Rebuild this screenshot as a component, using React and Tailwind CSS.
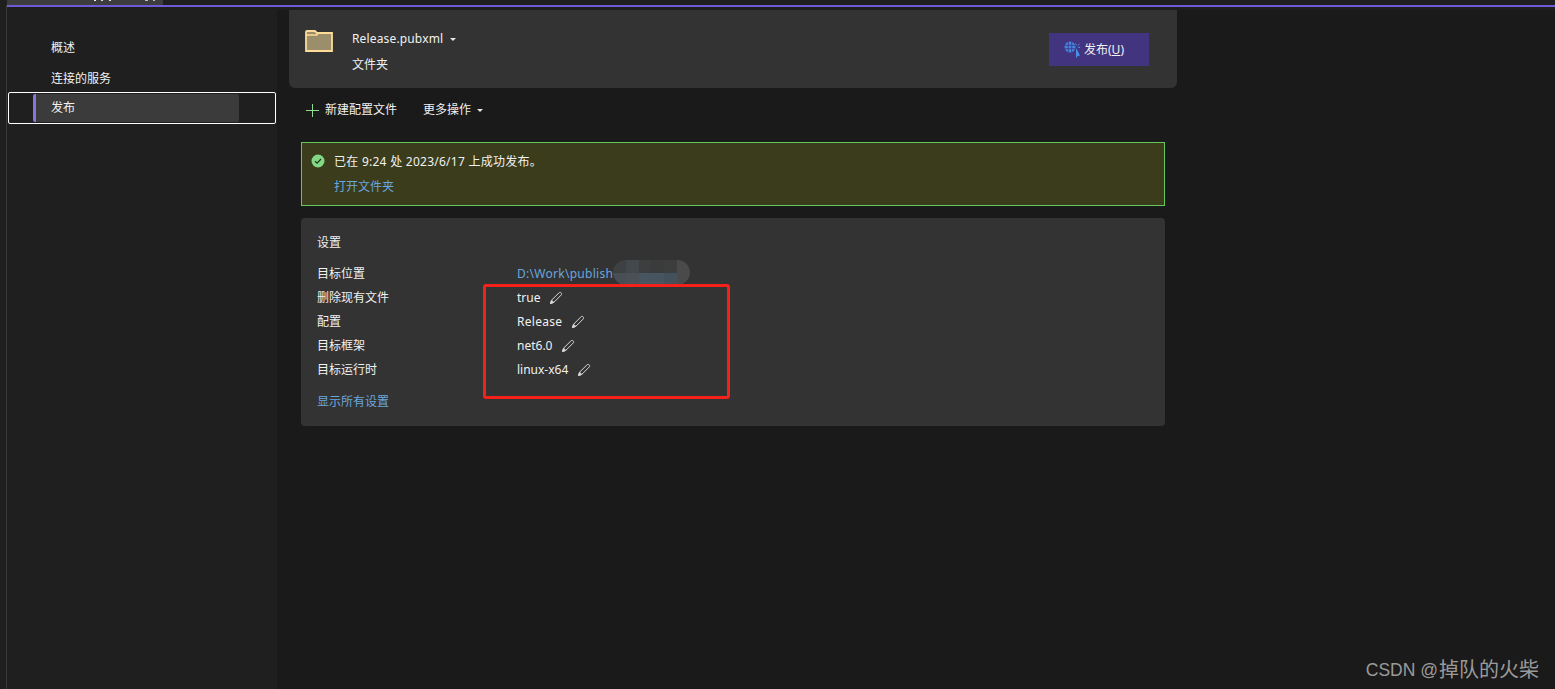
const font = { fontFamily: '"Noto Sans", "Noto Sans CJK SC", sans-serif' };

function Pencil() {
  return (
    <svg width="14" height="14" viewBox="0 0 14 14" fill="none" stroke="#d8d8d8" strokeWidth="1" className="shrink-0">
      <path d="M1.5 12.5 L2.6 9.2 L9.9 1.9 C10.6 1.2 11.5 1.2 12.1 1.8 C12.8 2.4 12.8 3.4 12.1 4.1 L4.8 11.4 Z" />
      <path d="M1.5 12.5 L2.6 9.2 L4.8 11.4 Z" fill="#d8d8d8" />
    </svg>
  );
}

function Caret({ className }) {
  return <span className={"inline-block w-0 h-0 border-l-[3.5px] border-r-[3.5px] border-t-[3.5px] border-l-transparent border-r-transparent border-t-[#e8e8e8] " + className} />;
}

function PublishIcon() {
  return (
    <svg width="17" height="18" viewBox="0 0 17 18" fill="none" className="shrink-0">
      <circle cx="6" cy="6" r="5.5" fill="#4386e0" />
      <path d="M0.8 4.3 H11.2 M0.8 7.7 H11.2 M4.3 0.8 V11.2 M7.7 0.8 V11.2" stroke="#42347f" strokeWidth="0.8" />
      <path d="M12 7 V17.5 L13.6 15 L16 14.6 Z" fill="#4a90e8" />
      <path d="M11.5 2.5 L12.5 4.2 M15.5 3 L13.8 4.5 M16 6.5 L13.8 6.2" stroke="#4a90e8" strokeWidth="1" />
    </svg>
  );
}

const mosaicTop = ["#3d4144", "#42484c", "#3c3e40", "#3a3b3b", "#3d3d3d", "#4a4a4a"];
const mosaicBottom = ["#474f54", "#4a5156", "#46555f", "#46555f", "#44505a", "#4a4a4a"];

function Mosaic() {
  return (
    <span className="absolute left-[96px] top-[-6px] w-[77px] h-[25px] rounded-full overflow-hidden grid grid-cols-6">
      {mosaicTop.map((c, i) => <span key={"t" + i} style={{ backgroundColor: c }} />)}
      {mosaicBottom.map((c, i) => <span key={"b" + i} style={{ backgroundColor: c }} />)}
    </span>
  );
}

function Row({ label, value, link, blur, edit, spaced }) {
  return (
    <div className="flex items-center h-6">
      <div className="w-[200px] text-[#f1f1f1]">{label}</div>
      <div className={"relative flex items-center " + (link ? "text-[#6ba6dd]" : "text-[#f1f1f1]")}>
        <span className={spaced ? "tracking-[0.28px]" : ""}>{value}</span>
        {edit && <span className="ml-[9px] flex"><Pencil /></span>}
        {blur && <Mosaic />}
      </div>
    </div>
  );
}

export default function App() {
  return (
    <div style={font} className="w-[1555px] h-[689px] overflow-hidden relative bg-[#1a1a1a] text-[12px] leading-[16px] text-[#f1f1f1] flex flex-col">
      <div className="h-[5px] pl-[7px] bg-[#1f1f1f] flex shrink-0">
        <div className="w-[156px] h-[5px] bg-[#3d3d3d] flex items-start pl-[87px]">
          <span className="w-[2px] h-[1px] bg-[#f0f0f0]" />
          <span className="ml-[5px] w-[2px] h-[1px] bg-[#e8d8c8]" />
          <span className="ml-[6px] w-[2px] h-[1px] bg-[#d8e8f0]" />
          <span className="ml-[34px] w-[3px] h-[1px] bg-[#bdbdbd]" />
          <span className="ml-[5px] w-[2px] h-[1px] bg-[#bdbdbd]" />
        </div>
      </div>
      <div className="h-[2px] ml-[7px] bg-[#6e5bd6] shrink-0" />
      <div className="flex flex-1 min-h-0">
        <div className="w-[7px] bg-[#1f1f1f] border-r border-[#3a3a3a] -mt-[2px] shrink-0" />
        <aside className="w-[270px] bg-[#1f1f1f] shrink-0 pt-[26px] pl-px">
          <div className="h-[31px] flex items-start pt-[7px] pl-[43px]">概述</div>
          <div className="h-[30px] flex items-start pt-[7px] pl-[43px]">连接的服务</div>
          <div className="-mt-[2px] h-[32px] w-[268px] border border-white rounded-[2px] flex items-center pl-6">
            <div className="w-[206px] h-[28px] bg-[#3b3b3b] rounded-[2px] border-l-[3px] border-[#8576dc] flex items-center pl-[15px]">发布</div>
          </div>
        </aside>
        <main className="w-[900px] shrink-0 pl-3">
          <div className="h-[3px] -ml-3 bg-[#1e1e1e]" />
          <section className="h-[78px] w-[888px] bg-[#333333] rounded-b-[6px] flex items-start pl-4 pr-7">
            <svg width="28" height="22" viewBox="0 0 28 22" className="mt-[20px] shrink-0">
              <path d="M1 21 V1.8 Q1 1 2 1 H10 L12 3 H27 V21 Z" fill="#9c8d6b" stroke="#fbdc98" strokeWidth="1.8" />
              <path d="M1 5 H12 L13 3" fill="none" stroke="#fbdc98" strokeWidth="1.4" />
            </svg>
            <div className="ml-[19px] pt-[21px] flex-1">
              <div className="flex items-center h-4">
                <span className="tracking-[0.15px]">Release.pubxml</span>
                <Caret className="ml-[7px]" />
              </div>
              <div className="mt-[10px]">文件夹</div>
            </div>
            <button className="mt-[23px] w-[100px] h-[33px] bg-[#42347f] flex items-center pl-[15px] gap-[3px] text-[#f1f1f1]">
              <PublishIcon />
              <span>发布(<span className="underline">U</span>)</span>
            </button>
          </section>
          <div className="h-[44px] flex items-center pl-[17px]">
            <svg width="13" height="13" viewBox="0 0 13 13" stroke="#93d893" strokeWidth="1"><path d="M6.5 0 V13 M0 6.5 H13" /></svg>
            <span className="ml-[6px]">新建配置文件</span>
            <span className="ml-[26px]">更多操作</span>
            <Caret className="ml-[6px]" />
          </div>
          <div className="ml-3 w-[864px]">
            <div className="mt-[10px] h-[64px] bg-[#3a3c1c] border border-[#63c95a] pl-[9px] pt-[11px] flex">
              <svg width="14" height="14" viewBox="0 0 14 14" className="shrink-0">
                <circle cx="7" cy="7" r="6.5" fill="#83d883" />
                <path d="M4 7.2 L6.1 9.2 L10 5" fill="none" stroke="#1f3a1f" strokeWidth="1.3" />
              </svg>
              <div className="ml-[9px]">
                <div className="tracking-[0.26px]">已在 9:24 处 2023/6/17 上成功发布。</div>
                <div className="mt-[9px] text-[#6ba6dd]">打开文件夹</div>
              </div>
            </div>
            <section className="mt-3 h-[208px] bg-[#333333] rounded-[4px] pl-4 pt-[17px]">
              <div className="h-4">设置</div>
              <div className="mt-[11px]">
                <Row label="目标位置" value={"D:\\Work\\publish"} link blur spaced />
                <Row label="删除现有文件" value="true" edit />
                <Row label="配置" value="Release" edit spaced />
                <Row label="目标框架" value="net6.0" edit />
                <Row label="目标运行时" value="linux-x64" edit />
              </div>
              <div className="mt-[12px] text-[#6ba6dd]">显示所有设置</div>
            </section>
          </div>
        </main>
        <div className="flex-1">
          <div className="h-[3px] bg-[#1e1e1e]" />
        </div>
      </div>
      <div className="absolute left-[483px] top-[284px] w-[247px] h-[115px] border-[3px] border-[#f3211a] rounded-[3px]" />
      <div className="absolute right-[16px] top-[658px] text-[17.5px] leading-[24px] text-[#9a9a9a] flex items-center" style={{ fontFamily: '"Liberation Sans", "Noto Sans CJK SC", sans-serif' }}>
        <span>CSDN @</span>
        <span className="text-[20px] ml-px">掉队的火柴</span>
      </div>
    </div>
  );
}
